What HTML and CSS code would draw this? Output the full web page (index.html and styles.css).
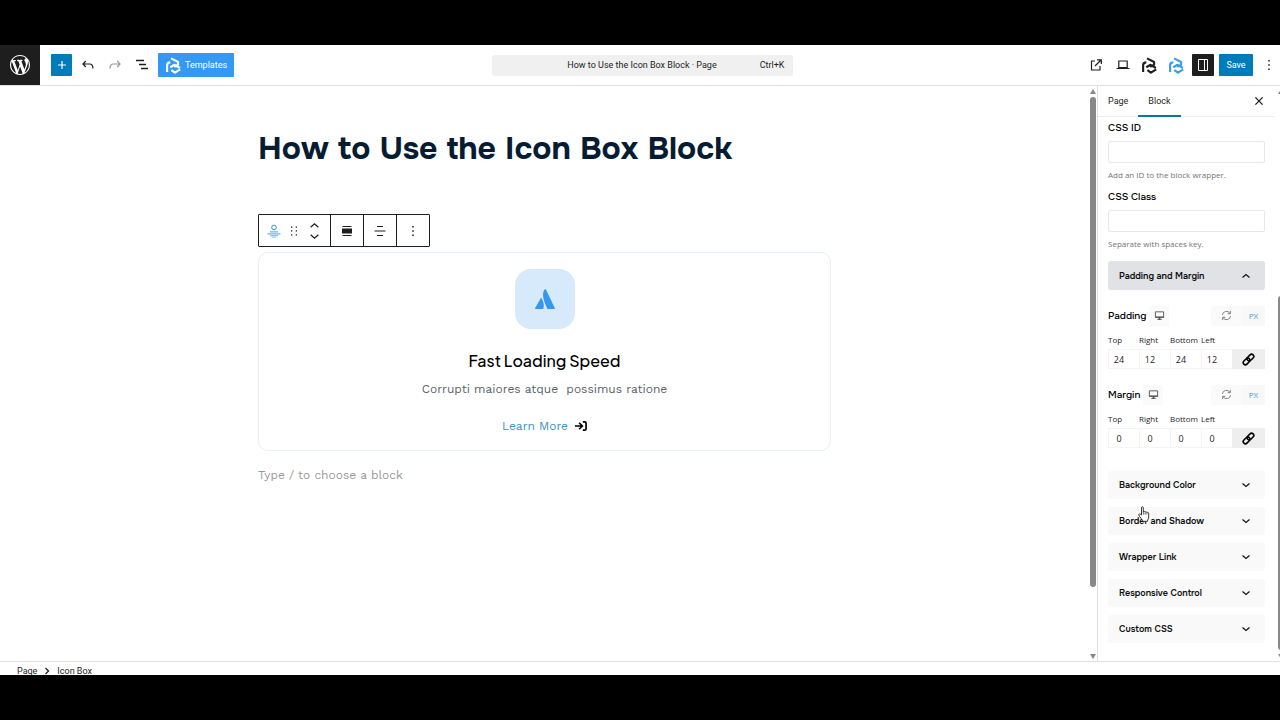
FILE: index.html
```
<!DOCTYPE html>
<html lang="en">
<head>
<meta charset="utf-8">
<title>How to Use the Icon Box Block</title>
<link rel="stylesheet" href="styles.css">
</head>
<body>
<svg class="defs" aria-hidden="true">
  <symbol id="brand" viewBox="0 0 24 24"><path d="M3 21V11.500c0-2.500 1.500-4 4.500-4M8.500 2 18.500 7v4L13 14M7.500 14.500l6-3.500 7.500 4.500M21.500 17.500 14 22l-5-3.500" fill="none" stroke="currentColor" stroke-width="3" stroke-linejoin="round"/></symbol>
  <symbol id="down" viewBox="0 0 10 10"><path d="M1.500 3.500 5 6.500l3.500-3" fill="none" stroke="currentColor" stroke-width="1.200"/></symbol>
  <symbol id="up" viewBox="0 0 10 10"><path d="M1.500 6.500 5 3.500l3.500 3" fill="none" stroke="currentColor" stroke-width="1.200"/></symbol>
  <symbol id="dots" viewBox="0 0 12 12"><path d="M5.200 1h1.600v1.600H5.200zM5.200 5.200h1.600v1.600H5.200zM5.200 9.400h1.600V11H5.200z"/></symbol>
  <symbol id="monitor" viewBox="0 0 12 12"><path d="M1.500 2h9v6h-9z" fill="none" stroke="currentColor"/><path d="M1.500 7h9v1.500h-9zM5 8h2v2h1.500v1h-5v-1H5z"/></symbol>
  <symbol id="refresh" viewBox="0 0 12 12"><path d="M1.500 5.300A4.500 4.500 0 0 1 9.700 3.500M10.500 6.700A4.500 4.500 0 0 1 2.300 8.500M10.200 1v3H7.300M1.800 11V8h2.900" fill="none" stroke="currentColor" stroke-width="1"/></symbol>
  <symbol id="chain" viewBox="0 0 24 24"><g transform="rotate(-45 12 12)" fill="none" stroke="currentColor" stroke-width="3" stroke-linecap="round"><rect x="0" y="8" width="14" height="8" rx="4"/><rect x="10" y="8" width="14" height="8" rx="4"/></g></symbol>
</svg>

<div class="app">
  <header class="topbar">
    <div class="tools">
      <a class="wp" href="#" aria-label="View pages"><svg viewBox="0 0 20 20"><path d="M20 10c0-5.510-4.490-10-10-10C4.480 0 0 4.490 0 10c0 5.520 4.480 10 10 10 5.510 0 10-4.480 10-10zM7.780 15.370L4.370 6.220c.55-.02 1.170-.08 1.170-.08.5-.06.44-1.130-.06-1.110 0 0-1.450.11-2.370.11-.18 0-.37 0-.58-.01C4.120 2.690 6.870 1.110 10 1.110c2.330 0 4.450.87 6.050 2.340-.68-.11-1.650.39-1.650 1.580 0 .74.450 1.360.9 2.100.35.610.550 1.360.550 2.460 0 1.490-1.400 5-1.400 5l-3.030-8.370c.54-.02.82-.17.82-.17.5-.05.44-1.250-.06-1.220 0 0-1.440.12-2.380.12-.87 0-2.330-.12-2.330-.12-.5-.03-.56 1.200-.06 1.220l.92.08 1.260 3.410zM17.410 10c.24-.64.74-1.870.43-4.250.7 1.290 1.050 2.710 1.050 4.250 0 3.290-1.730 6.240-4.400 7.780.97-2.590 1.940-5.200 2.920-7.780zM6.100 18.090C3.120 16.650 1.110 13.530 1.110 10c0-1.300.23-2.480.72-3.590C3.250 10.300 4.670 14.200 6.100 18.090zm4.030-6.630l2.580 6.980c-.86.29-1.760.450-2.710.450-.79 0-1.570-.11-2.290-.33.81-2.380 1.620-4.740 2.420-7.100z"/></svg></a>
      <button class="add" aria-label="Add block"><svg viewBox="0 0 12 12"><path d="M6 2v8M2 6h8" fill="none" stroke="currentColor" stroke-width="1.200"/></svg></button>
      <button class="tool" aria-label="Undo"><svg viewBox="0 0 14 14"><path d="M4.800 3 2 6l2.800 3M2 6h6.500c2.500 0 3.500 1.500 3.500 4.500" fill="none" stroke="currentColor" stroke-width="1.200"/></svg></button>
      <button class="tool faded" aria-label="Redo" disabled><svg viewBox="0 0 14 14"><path d="M9.200 3 12 6 9.200 9M12 6H5.500C3 6 2 7.500 2 10.500" fill="none" stroke="currentColor" stroke-width="1.200"/></svg></button>
      <button class="tool" aria-label="Document overview"><svg viewBox="0 0 14 14"><path d="M1 2.500h8M4 6.500h7M6 10.500h7" fill="none" stroke="currentColor" stroke-width="1.300"/></svg></button>
      <button class="templates"><svg><use href="#brand"/></svg>Templates</button>
    </div>
    <button class="document"><span></span><span>How to Use the Icon Box Block · Page</span><span class="keys">Ctrl+K</span></button>
    <div class="actions">
      <a class="tool" href="#" aria-label="View page"><svg viewBox="0 0 14 14"><path d="M6 3H2.500v9h8.500V8M8 1.800h4.300V6M12 2 6 8" fill="none" stroke="currentColor" stroke-width="1.200"/></svg></a>
      <button class="tool" aria-label="Preview"><svg viewBox="0 0 14 14"><path d="M2.800 3h8.400v6.500H2.800zM.5 10.500h13" fill="none" stroke="currentColor" stroke-width="1.200"/></svg></button>
      <button class="tool logo" aria-label="Block library"><svg><use href="#brand"/></svg></button>
      <button class="tool logo blue" aria-label="Block settings"><svg><use href="#brand"/></svg></button>
      <button class="settings" aria-label="Settings"><svg viewBox="0 0 12 12"><path d="M1.500.5h9v11h-9zM7.500 1v10" fill="none" stroke="currentColor"/></svg></button>
      <button class="save">Save</button>
      <button class="more" aria-label="Options"><svg><use href="#dots"/></svg></button>
    </div>
  </header>

  <div class="workspace">
    <main class="canvas">
      <article class="post">
        <h1>How to Use the Icon Box Block</h1>
        <div class="toolbar" role="toolbar" aria-label="Block tools">
          <div class="group">
            <button aria-label="Icon Box"><svg class="blocktype" viewBox="0 0 14 14"><circle cx="7" cy="3.500" r="2.300" fill="none" stroke="#3796cf"/><path d="M3 7.300h8v1.300H3zM.5 9.300h13v1.300H.5zM3 11.200h8v1H3zM5 12.700h4v.8H5z" fill="#6fb6e8"/></svg></button>
            <button aria-label="Drag"><svg viewBox="0 0 12 12"><path d="M3 1.500h1.300v1.300H3zM7.700 1.500H9v1.300H7.700zM3 5.300h1.300v1.300H3zM7.700 5.300H9v1.300H7.700zM3 9.200h1.300v1.300H3zM7.700 9.200H9v1.300H7.700z"/></svg></button>
            <span class="movers">
              <button aria-label="Move up"><svg><use href="#up"/></svg></button>
              <button aria-label="Move down"><svg><use href="#down"/></svg></button>
            </span>
          </div>
          <button class="cell" aria-label="Width"><svg viewBox="0 0 12 12"><path d="M1.500 1h9v1h-9zM1 3.500h10v5H1zM1.500 10h9v1h-9z"/></svg></button>
          <button class="cell" aria-label="Align"><svg viewBox="0 0 12 12"><path d="M3 1h6v1H3zM.5 5.500h11v1H.5zM3 10h6v1H3z"/></svg></button>
          <button class="cell" aria-label="More"><svg><use href="#dots"/></svg></button>
        </div>
        <section class="iconbox">
          <div class="tile"><svg viewBox="0 0 20 20"><path d="M10 .2c.5-.2.7 0 .9.400l8.900 18.300c.3.600 0 1.100-.6 1.100h-6.100c-.4 0-.7-.2-.9-.6C9.800 14 7.200 8.500 8.300 3.400 8.600 2 9.300.8 10 .200zM5.700 9.300c.3-.4.7-.3.9.1 2 3.300 2.700 6.700 1.800 10-.1.400-.4.600-.8.600H.800c-.6 0-.9-.4-.6-1z"/></svg></div>
          <h2>Fast Loading Speed</h2>
          <p>Corrupti maiores atque &nbsp;possimus ratione</p>
          <a href="#">Learn More <svg viewBox="0 0 14 12"><path d="M1 6h7.500M5.500 2.500 9 6 5.500 9.500M9.500 1.500h2c1 0 1.500.5 1.500 1.500v6c0 1-.5 1.500-1.500 1.500h-2" fill="none" stroke="currentColor" stroke-width="1.800"/></svg></a>
        </section>
        <p class="prompt">Type / to choose a block</p>
      </article>
      <div class="scroll" aria-hidden="true"><i class="arrow"></i><i class="thumb"></i><i class="arrow below"></i></div>
    </main>

    <aside class="inspector">
      <div class="tabs">
        <button>Page</button><button class="current">Block</button>
        <button class="close" aria-label="Close settings"><svg viewBox="0 0 10 10"><path d="m2 2 6 6M8 2 2 8" fill="none" stroke="currentColor" stroke-width="1.100"/></svg></button>
      </div>
      <div class="fields">
        <div class="field"><label for="cssid">CSS ID</label><input id="cssid"><p>Add an ID to the block wrapper.</p></div>
        <div class="field"><label for="cssclass">CSS Class</label><input id="cssclass"><p>Separate with spaces key.</p></div>
        <button class="panel open">Padding and Margin<svg><use href="#up"/></svg></button>
        <fieldset class="spacing">
          <div class="head"><span>Padding</span><button class="device" aria-label="Device"><svg><use href="#monitor"/></svg></button><button class="reset" aria-label="Reset padding"><svg><use href="#refresh"/></svg></button><button class="unit">PX</button></div>
          <div class="sides">
            <label>Top<input value="24"></label><label>Right<input value="12"></label><label>Bottom<input value="24"></label><label>Left<input value="12"></label>
            <button class="link" aria-label="Link padding sides"><svg><use href="#chain"/></svg></button>
          </div>
        </fieldset>
        <fieldset class="spacing">
          <div class="head"><span>Margin</span><button class="device" aria-label="Device"><svg><use href="#monitor"/></svg></button><button class="reset" aria-label="Reset margin"><svg><use href="#refresh"/></svg></button><button class="unit">PX</button></div>
          <div class="sides">
            <label>Top<input value="0"></label><label>Right<input value="0"></label><label>Bottom<input value="0"></label><label>Left<input value="0"></label>
            <button class="link" aria-label="Link margin sides"><svg><use href="#chain"/></svg></button>
          </div>
        </fieldset>
        <div class="panels">
          <button class="panel">Background Color<svg><use href="#down"/></svg></button>
          <button class="panel">Border and Shadow<svg><use href="#down"/></svg></button>
          <button class="panel">Wrapper Link<svg><use href="#down"/></svg></button>
          <button class="panel">Responsive Control<svg><use href="#down"/></svg></button>
          <button class="panel">Custom CSS<svg><use href="#down"/></svg></button>
          <svg class="pointer" viewBox="0 0 12 16" aria-hidden="true"><path d="M3.500 9V1.700c0-1.300 1.800-1.300 1.800 0V6c.3-.8 1.700-.7 1.800.2.400-.7 1.700-.5 1.800.4.500-.6 1.800-.3 1.800.8V11c0 2-1.200 2.500-1.200 4.300H4.700C4.500 13 1.700 11.500.8 9c-.3-1 .9-1.500 1.500-.8z" fill="#fff" stroke="#222" stroke-width=".9"/><path d="M5.300 6v2.500M7.100 6.500v2M8.900 7v1.500" stroke="#222" stroke-width=".7"/></svg>
        </div>
      </div>
      <div class="scroll" aria-hidden="true"><i class="arrow"></i><i class="thumb"></i><i class="arrow below"></i></div>
    </aside>
  </div>
  <footer class="crumbs"><a href="#">Page</a><svg viewBox="0 0 8 8"><path d="m2.500 1 3 3-3 3" fill="none" stroke="currentColor" stroke-width="1.300"/></svg><a href="#">Icon Box</a></footer>
</div>
</body>
</html>
```
FILE: styles.css
```
* { box-sizing: border-box; }
body { margin: 0; background: #000; font: 9px/14px Roboto, "Noto Sans", sans-serif; color: #1e1e1e; }
button, input { font: inherit; color: inherit; margin: 0; padding: 0; border: 0; background: none; }
button { display: flex; align-items: center; justify-content: center; }
a { color: inherit; text-decoration: none; }
svg { display: block; flex: none; fill: currentColor; width: 12px; height: 12px; }
h1, h2, p, fieldset { margin: 0; padding: 0; border: 0; min-width: 0; }
.defs { position: absolute; width: 0; height: 0; }

.app { display: flex; flex-direction: column; height: 100vh; padding: 45px 0; }
.app > * { background-color: #fff; }

.topbar { display: grid; grid-template-columns: 1fr 305px 1fr; height: 41px; flex: none; align-items: center; border-bottom: 1px solid #e0e0e0; }
.tools, .actions { display: flex; align-items: center; }
.wp { display: flex; align-items: center; justify-content: center; width: 40px; height: 40px; margin-right: 11px; background: #1e1e1e; color: #fff; }
.wp svg { width: 20px; height: 20px; }
.add { width: 21px; height: 22px; margin-right: 2px; background: #007cba; border-radius: 1px; color: #fff; }
.tool { display: flex; align-items: center; justify-content: center; width: 27px; height: 24px; }
.tool svg { width: 14px; height: 14px; }
.faded { color: #999; }
.templates { gap: 3px; height: 24px; padding: 0 7px; margin-left: 3px; background: #3399f5; border-radius: 1px; color: #fff; }
.templates svg, .tool.logo svg { width: 17px; height: 17px; }
.blue { color: #3a9eea; }
.document { display: grid; grid-template-columns: 1fr auto 1fr; height: 21px; margin-left: 4px; padding: 0 8px; background: #f0f0f0; border-radius: 3px; }
.keys { text-align: right; }
.actions { justify-content: flex-end; padding-right: 3px; }
.settings { width: 22px; height: 22px; margin: 0 5px 0 2px; background: #1e1e1e; border-radius: 1px; color: #fff; }
.save { width: 34px; height: 22px; margin-right: 8px; background: #007cba; border-radius: 1px; color: #fff; }
.more { width: 16px; height: 22px; }

.workspace { display: flex; flex: 1; min-height: 0; }
.canvas { display: flex; flex: 1; min-width: 0; }
.post { width: 100%; max-width: 573px; margin: 0 auto; padding-top: 43px; font: 12px/20px "Work Sans", "Noto Sans", sans-serif; }
h1 { font: 700 32px/40px Onest, Inter, sans-serif; color: #061c33; }
.toolbar { display: flex; width: max-content; height: 33px; margin: 45px 0 5px; border: 1px solid #1e1e1e; border-radius: 1px; }
.group { display: flex; align-items: center; width: 71px; padding: 0 5px; }
.group > * { width: 20px; }
.group .blocktype { width: 14px; height: 14px; }
.movers { display: flex; flex-direction: column; align-items: center; }
.movers svg { width: 11px; height: 11px; }
.cell { width: 33px; border-left: 1px solid #1e1e1e; }
.iconbox { display: flex; flex-direction: column; align-items: center; padding: 16px 12px 14px; border: 1px solid #e6eff4; border-radius: 10px; }
.tile { display: flex; align-items: center; justify-content: center; width: 60px; height: 60px; margin-bottom: 20px; border-radius: 16px; background: #d7eafc; color: #3597ed; }
.tile svg { width: 20px; height: 20px; }
h2 { font: 500 16px/24px "Plus Jakarta Sans", Inter, sans-serif; color: #000; margin-bottom: 6px; }
.iconbox p { color: #5a6268; margin-bottom: 17px; }
.iconbox a { display: flex; align-items: center; gap: 6px; color: #3c92c4; }
.iconbox a svg { width: 13px; height: 12px; color: #000; }
.prompt { margin-top: 14px; color: #999; }

.scroll { display: flex; flex-direction: column; flex: none; width: 8px; padding: 3px 1px 2px; align-items: center; }
.arrow { border: 3px solid transparent; border-top: 0; border-bottom: 5px solid #888; }
.below { border-top: 5px solid #888; border-bottom: 0; margin-top: auto; }
.thumb { width: 6px; height: 86%; margin-top: 3px; border-radius: 3px; background: #888; }

.inspector { position: relative; width: 183px; border-left: 1px solid #e0e0e0; flex: none; overflow: hidden; }
.inspector .scroll { position: absolute; top: 0; right: -5px; bottom: 0; }
.inspector .thumb { height: 354px; margin-top: auto; }
.inspector .below { margin-top: 4px; }
.tabs { display: flex; height: 31px; margin: 0 5px 0 0; border-bottom: 1px solid #eee; }
.tabs button { padding: 0 10px; }
.tabs .current { border-bottom: 2px solid #007c9a; margin-bottom: -1px; }
.tabs .close { margin-left: auto; }
.fields { padding: 4px 15px 0 10px; }
.field { display: flex; flex-direction: column; margin-bottom: 8px; }
.field label { font: 500 10px/14px Onest, Inter, sans-serif; margin-bottom: 6px; color: #000; }
.field input { height: 22px; padding: 0 6px; border: 1px solid #e8e8e8; border-radius: 2px; }
.field p { margin-top: 5px; font: 8px/14px "Open Sans", sans-serif; color: #757575; }
.panel { width: 100%; height: 28px; padding: 0 14px 0 11px; justify-content: space-between; border-radius: 3px; background: #f9f9f9; font: 600 9px/14px Onest, Inter, sans-serif; color: #111; }
.panel svg { width: 10px; height: 10px; }
.open { height: 29px; margin-top: 10px; background: #e0e2e5; }
.spacing { margin-top: 15px; }
.head { display: flex; align-items: center; height: 21px; font: 500 10px/14px Onest, Inter, sans-serif; color: #000; }
.device { width: 20px; height: 20px; margin: 0 auto 0 3px; background: #fafafa; color: #555; }
.device svg, .reset svg { width: 11px; height: 11px; }
.reset { width: 31px; height: 20px; background: #fafafa; color: #777; }
.unit { width: 23px; height: 20px; background: #f8f8f8; font: 8px/14px "Open Sans", sans-serif; color: #4b9fd5; }
.sides { display: grid; grid-template-columns: repeat(4, 31px) 1fr; margin-top: 7px; font: 8px/14px "Open Sans", sans-serif; }
.sides label { display: flex; flex-direction: column; gap: 2px; }
.sides input { width: 31px; height: 20px; padding: 0 10px 0 0; border: 1px solid #f4f4f4; border-right-width: 0; font-size: 9px; text-align: center; }
.link { height: 20px; align-self: end; background: #eee; color: #000; }
.link svg { width: 13px; height: 13px; }
.panels { position: relative; display: flex; flex-direction: column; gap: 8px; margin-top: 23px; }
.pointer { position: absolute; left: 30px; top: 35px; width: 12px; height: 16px; }

.crumbs { display: flex; align-items: center; gap: 6px; flex: none; height: 14px; padding: 4px 17px 0; border-top: 1px solid #e0e0e0; overflow: hidden; }
.crumbs svg { width: 8px; height: 8px; }
```
